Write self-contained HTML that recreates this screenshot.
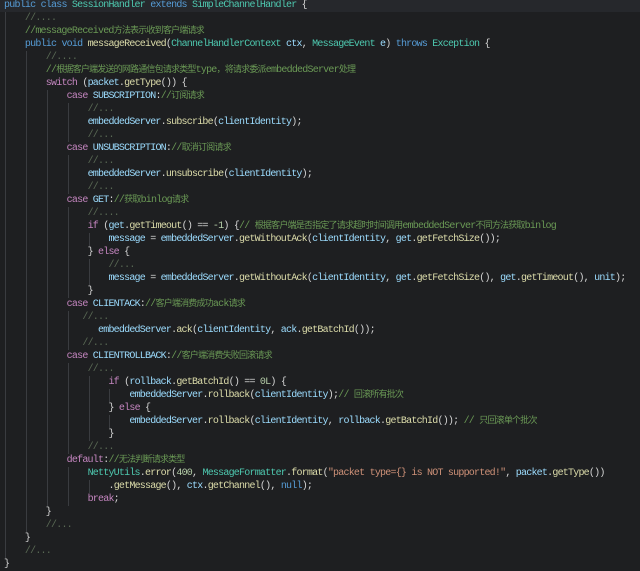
<!DOCTYPE html>
<html><head><meta charset="utf-8">
<style>
html,body{margin:0;padding:0;background:#1e1f21;}
body{width:640px;height:570px;overflow:hidden;position:relative;}
pre{margin:0;padding:0 0 0 4px;position:absolute;top:-1px;left:0;font-family:"Liberation Mono","Noto Sans CJK SC",monospace;font-size:10px;letter-spacing:-0.78px;line-height:13px;color:#d4d4d4;white-space:pre;}
.hl{position:absolute;left:0;top:0;width:640px;height:12px;background:#26282c;}
.g{display:inline-block;height:13px;vertical-align:top;background:linear-gradient(#3a3c40,#3a3c40) 1px 0/1px 100% no-repeat;}
.z{font-size:9px;letter-spacing:-0.8px;}
.k{color:#c586c0}.b{color:#569cd6}.t{color:#4ec9b0}.v{color:#9cdcfe}.f{color:#dcdcaa}.c{color:#6a9955}.d{color:#5a6a55}.s{color:#ce9178}.n{color:#b5cea8}
</style></head><body>
<div class="hl"></div>
<pre><span class="b">public</span> <span class="b">class</span> <span class="t">SessionHandler</span> <span class="b">extends</span> <span class="t">SimpleChannelHandler</span> {
<span class="g">    </span><span class="d">//....</span>
<span class="g">    </span><span class="c">//messageReceived<span class="z">方法表示收到客户端请求</span></span>
<span class="g">    </span><span class="b">public</span> <span class="b">void</span> <span class="f">messageReceived</span>(<span class="t">ChannelHandlerContext</span> <span class="v">ctx</span>, <span class="t">MessageEvent</span> <span class="v">e</span>) <span class="b">throws</span> <span class="t">Exception</span> {
<span class="g">    </span><span class="g">    </span><span class="d">//....</span>
<span class="g">    </span><span class="g">    </span><span class="c">//<span class="z">根据客户端发送的网路通信包请求类型</span>type<span class="z">，将请求委派</span>embeddedServer<span class="z">处理</span></span>
<span class="g">    </span><span class="g">    </span><span class="k">switch</span> (<span class="v">packet</span>.<span class="f">getType</span>()) {
<span class="g">    </span><span class="g">    </span><span class="g">    </span><span class="k">case</span> <span class="v">SUBSCRIPTION</span>:<span class="c">//<span class="z">订阅请求</span></span>
<span class="g">    </span><span class="g">    </span><span class="g">    </span><span class="g">    </span><span class="d">//...</span>
<span class="g">    </span><span class="g">    </span><span class="g">    </span><span class="g">    </span><span class="v">embeddedServer</span>.<span class="f">subscribe</span>(<span class="v">clientIdentity</span>);
<span class="g">    </span><span class="g">    </span><span class="g">    </span><span class="g">    </span><span class="d">//...</span>
<span class="g">    </span><span class="g">    </span><span class="g">    </span><span class="k">case</span> <span class="v">UNSUBSCRIPTION</span>:<span class="c">//<span class="z">取消订阅请求</span></span>
<span class="g">    </span><span class="g">    </span><span class="g">    </span><span class="g">    </span><span class="d">//...</span>
<span class="g">    </span><span class="g">    </span><span class="g">    </span><span class="g">    </span><span class="v">embeddedServer</span>.<span class="f">unsubscribe</span>(<span class="v">clientIdentity</span>);
<span class="g">    </span><span class="g">    </span><span class="g">    </span><span class="g">    </span><span class="d">//...</span>
<span class="g">    </span><span class="g">    </span><span class="g">    </span><span class="k">case</span> <span class="v">GET</span>:<span class="c">//<span class="z">获取</span>binlog<span class="z">请求</span></span>
<span class="g">    </span><span class="g">    </span><span class="g">    </span><span class="g">    </span><span class="d">//....</span>
<span class="g">    </span><span class="g">    </span><span class="g">    </span><span class="g">    </span><span class="k">if</span> (<span class="v">get</span>.<span class="f">getTimeout</span>() == <span class="n">-1</span>) {<span class="c">// <span class="z">根据客户端是否指定了请求超时时间调用</span>embeddedServer<span class="z">不同方法获取</span>binlog</span>
<span class="g">    </span><span class="g">    </span><span class="g">    </span><span class="g">    </span><span class="g">    </span><span class="v">message</span> = <span class="v">embeddedServer</span>.<span class="f">getWithoutAck</span>(<span class="v">clientIdentity</span>, <span class="v">get</span>.<span class="f">getFetchSize</span>());
<span class="g">    </span><span class="g">    </span><span class="g">    </span><span class="g">    </span>} <span class="k">else</span> {
<span class="g">    </span><span class="g">    </span><span class="g">    </span><span class="g">    </span><span class="g">    </span><span class="d">//...</span>
<span class="g">    </span><span class="g">    </span><span class="g">    </span><span class="g">    </span><span class="g">    </span><span class="v">message</span> = <span class="v">embeddedServer</span>.<span class="f">getWithoutAck</span>(<span class="v">clientIdentity</span>, <span class="v">get</span>.<span class="f">getFetchSize</span>(), <span class="v">get</span>.<span class="f">getTimeout</span>(), <span class="v">unit</span>);
<span class="g">    </span><span class="g">    </span><span class="g">    </span><span class="g">    </span>}
<span class="g">    </span><span class="g">    </span><span class="g">    </span><span class="k">case</span> <span class="v">CLIENTACK</span>:<span class="c">//<span class="z">客户端消费成功</span>ack<span class="z">请求</span></span>
<span class="g">    </span><span class="g">    </span><span class="g">    </span><span class="g">   </span><span class="d">//...</span>
<span class="g">    </span><span class="g">    </span><span class="g">    </span><span class="g">      </span><span class="v">embeddedServer</span>.<span class="f">ack</span>(<span class="v">clientIdentity</span>, <span class="v">ack</span>.<span class="f">getBatchId</span>());
<span class="g">    </span><span class="g">    </span><span class="g">    </span><span class="g">   </span><span class="d">//...</span>
<span class="g">    </span><span class="g">    </span><span class="g">    </span><span class="k">case</span> <span class="v">CLIENTROLLBACK</span>:<span class="c">//<span class="z">客户端消费失败回滚请求</span></span>
<span class="g">    </span><span class="g">    </span><span class="g">    </span><span class="g">    </span><span class="d">//...</span>
<span class="g">    </span><span class="g">    </span><span class="g">    </span><span class="g">    </span><span class="g">    </span><span class="k">if</span> (<span class="v">rollback</span>.<span class="f">getBatchId</span>() == <span class="n">0L</span>) {
<span class="g">    </span><span class="g">    </span><span class="g">    </span><span class="g">    </span><span class="g">    </span><span class="g">    </span><span class="v">embeddedServer</span>.<span class="f">rollback</span>(<span class="v">clientIdentity</span>);<span class="c">// <span class="z">回滚所有批次</span></span>
<span class="g">    </span><span class="g">    </span><span class="g">    </span><span class="g">    </span><span class="g">    </span>} <span class="k">else</span> {
<span class="g">    </span><span class="g">    </span><span class="g">    </span><span class="g">    </span><span class="g">    </span><span class="g">    </span><span class="v">embeddedServer</span>.<span class="f">rollback</span>(<span class="v">clientIdentity</span>, <span class="v">rollback</span>.<span class="f">getBatchId</span>()); <span class="c">// <span class="z">只回滚单个批次</span></span>
<span class="g">    </span><span class="g">    </span><span class="g">    </span><span class="g">    </span><span class="g">    </span>}
<span class="g">    </span><span class="g">    </span><span class="g">    </span><span class="g">    </span><span class="d">//...</span>
<span class="g">    </span><span class="g">    </span><span class="g">    </span><span class="k">default</span>:<span class="c">//<span class="z">无法判断请求类型</span></span>
<span class="g">    </span><span class="g">    </span><span class="g">    </span><span class="g">    </span><span class="t">NettyUtils</span>.<span class="f">error</span>(<span class="n">400</span>, <span class="t">MessageFormatter</span>.<span class="f">format</span>(<span class="s">"packet type={} is NOT supported!"</span>, <span class="v">packet</span>.<span class="f">getType</span>())
<span class="g">    </span><span class="g">    </span><span class="g">    </span><span class="g">    </span><span class="g">    </span>.<span class="f">getMessage</span>(), <span class="v">ctx</span>.<span class="f">getChannel</span>(), <span class="b">null</span>);
<span class="g">    </span><span class="g">    </span><span class="g">    </span><span class="g">    </span><span class="k">break</span>;
<span class="g">    </span><span class="g">    </span>}
<span class="g">    </span><span class="g">    </span><span class="d">//...</span>
<span class="g">    </span>}
<span class="g">    </span><span class="d">//...</span>
}</pre>
</body></html>
